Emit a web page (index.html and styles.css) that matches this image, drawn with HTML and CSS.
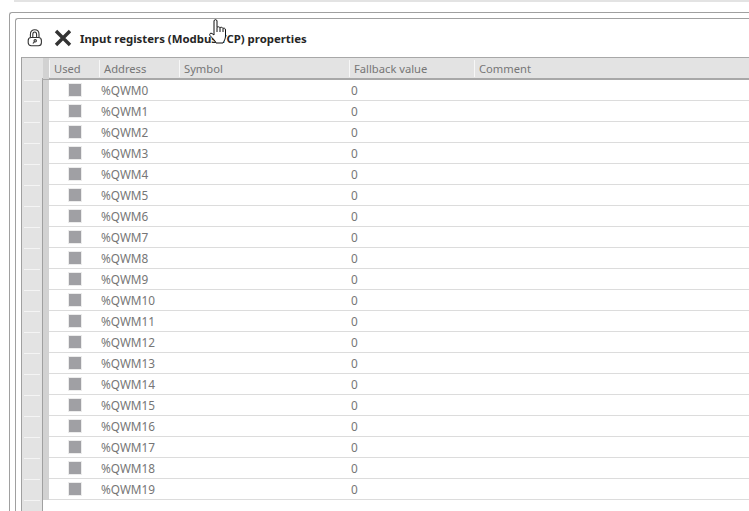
FILE: index.html
```html
<!DOCTYPE html>
<html lang="en">
<head>
<meta charset="utf-8">
<title>Input registers (Modbus TCP) properties</title>
<link rel="stylesheet" href="styles.css">
</head>
<body>
<div class="topband"></div>
<div class="outer">
  <div class="inner">
    <div class="titlebar">
      <svg class="lock" width="16" height="18" viewBox="0 0 16 18" fill="none" stroke="#333" stroke-width="1.100">
        <path d="M3.400 8.500V5.200C3.400 2.400 5.300.8 7.700.8s4.300 1.600 4.300 4.400v3.300"/>
        <path d="M5.800 8.500V5.400C5.800 3.900 6.600 3 7.700 3s1.900.9 1.900 2.400v3.100"/>
        <rect x="1.200" y="8.500" width="13.200" height="8.200" rx="3"/>
        <circle cx="8.200" cy="11.800" r="1.200"/>
        <path d="M7.400 12.800l-1.500 1.700"/>
      </svg>
      <svg class="close" width="18" height="18" viewBox="0 0 18 18" stroke="#333" stroke-width="3.400" fill="none">
        <path d="M2 2l14 14M16 2L2 16"/>
      </svg>
      <span class="title">Input registers (Modbus TCP) properties</span>
    </div>
    <div class="table">
      <div class="gutter">
        <div class="gutter-head"></div>
        <div class="gutter-cell"></div><div class="gutter-cell"></div><div class="gutter-cell"></div><div class="gutter-cell"></div><div class="gutter-cell"></div>
        <div class="gutter-cell"></div><div class="gutter-cell"></div><div class="gutter-cell"></div><div class="gutter-cell"></div><div class="gutter-cell"></div>
        <div class="gutter-cell"></div><div class="gutter-cell"></div><div class="gutter-cell"></div><div class="gutter-cell"></div><div class="gutter-cell"></div>
        <div class="gutter-cell"></div><div class="gutter-cell"></div><div class="gutter-cell"></div><div class="gutter-cell"></div><div class="gutter-cell"></div>
      </div>
      <div class="grid">
        <div class="row head">
          <div class="strip"></div>
          <div class="col used">Used</div>
          <div class="col addr">Address</div>
          <div class="col sym">Symbol</div>
          <div class="col fb">Fallback value</div>
          <div class="col com">Comment</div>
        </div>
        <div class="row"><div class="strip"></div><div class="col used"><i class="box"></i></div><div class="col addr">%QWM0</div><div class="col sym"></div><div class="col fb">0</div><div class="col com"></div></div>
        <div class="row"><div class="strip"></div><div class="col used"><i class="box"></i></div><div class="col addr">%QWM1</div><div class="col sym"></div><div class="col fb">0</div><div class="col com"></div></div>
        <div class="row"><div class="strip"></div><div class="col used"><i class="box"></i></div><div class="col addr">%QWM2</div><div class="col sym"></div><div class="col fb">0</div><div class="col com"></div></div>
        <div class="row"><div class="strip"></div><div class="col used"><i class="box"></i></div><div class="col addr">%QWM3</div><div class="col sym"></div><div class="col fb">0</div><div class="col com"></div></div>
        <div class="row"><div class="strip"></div><div class="col used"><i class="box"></i></div><div class="col addr">%QWM4</div><div class="col sym"></div><div class="col fb">0</div><div class="col com"></div></div>
        <div class="row"><div class="strip"></div><div class="col used"><i class="box"></i></div><div class="col addr">%QWM5</div><div class="col sym"></div><div class="col fb">0</div><div class="col com"></div></div>
        <div class="row"><div class="strip"></div><div class="col used"><i class="box"></i></div><div class="col addr">%QWM6</div><div class="col sym"></div><div class="col fb">0</div><div class="col com"></div></div>
        <div class="row"><div class="strip"></div><div class="col used"><i class="box"></i></div><div class="col addr">%QWM7</div><div class="col sym"></div><div class="col fb">0</div><div class="col com"></div></div>
        <div class="row"><div class="strip"></div><div class="col used"><i class="box"></i></div><div class="col addr">%QWM8</div><div class="col sym"></div><div class="col fb">0</div><div class="col com"></div></div>
        <div class="row"><div class="strip"></div><div class="col used"><i class="box"></i></div><div class="col addr">%QWM9</div><div class="col sym"></div><div class="col fb">0</div><div class="col com"></div></div>
        <div class="row"><div class="strip"></div><div class="col used"><i class="box"></i></div><div class="col addr">%QWM10</div><div class="col sym"></div><div class="col fb">0</div><div class="col com"></div></div>
        <div class="row"><div class="strip"></div><div class="col used"><i class="box"></i></div><div class="col addr">%QWM11</div><div class="col sym"></div><div class="col fb">0</div><div class="col com"></div></div>
        <div class="row"><div class="strip"></div><div class="col used"><i class="box"></i></div><div class="col addr">%QWM12</div><div class="col sym"></div><div class="col fb">0</div><div class="col com"></div></div>
        <div class="row"><div class="strip"></div><div class="col used"><i class="box"></i></div><div class="col addr">%QWM13</div><div class="col sym"></div><div class="col fb">0</div><div class="col com"></div></div>
        <div class="row"><div class="strip"></div><div class="col used"><i class="box"></i></div><div class="col addr">%QWM14</div><div class="col sym"></div><div class="col fb">0</div><div class="col com"></div></div>
        <div class="row"><div class="strip"></div><div class="col used"><i class="box"></i></div><div class="col addr">%QWM15</div><div class="col sym"></div><div class="col fb">0</div><div class="col com"></div></div>
        <div class="row"><div class="strip"></div><div class="col used"><i class="box"></i></div><div class="col addr">%QWM16</div><div class="col sym"></div><div class="col fb">0</div><div class="col com"></div></div>
        <div class="row"><div class="strip"></div><div class="col used"><i class="box"></i></div><div class="col addr">%QWM17</div><div class="col sym"></div><div class="col fb">0</div><div class="col com"></div></div>
        <div class="row"><div class="strip"></div><div class="col used"><i class="box"></i></div><div class="col addr">%QWM18</div><div class="col sym"></div><div class="col fb">0</div><div class="col com"></div></div>
        <div class="row"><div class="strip"></div><div class="col used"><i class="box"></i></div><div class="col addr">%QWM19</div><div class="col sym"></div><div class="col fb">0</div><div class="col com"></div></div>
      </div>
    </div>
  </div>
</div>
<svg class="cursor" width="18" height="25" viewBox="0 0 18 25" stroke="#111" stroke-width="1" fill="#fff">
  <path d="M5 2C5 .2 8 .2 8 2V8.500C8.500 7.500 10.500 7.500 11 8.800 11.500 8 13.500 8 14 9.500 14.500 8.800 16.500 9 16.500 11V17C16.500 20 15 22 14 24H7C6 21 3 19 1 16.500 0 15 1.500 13.500 3 14.500L5 16Z"/>
  <path d="M8 8.500V13M11 8.800V13M14 9.500V13" fill="none"/>
</svg>
</body>
</html>
```

FILE: styles.css
```css
html, body {
  margin: 0;
  padding: 0;
  height: 511px;
  overflow: hidden;
  background: #fff;
}
body {
  position: relative;
  font-family: "Noto Sans", "Open Sans", sans-serif;
  font-size: 11.8px;
  color: #767676;
}
.topband {
  height: 2px;
  margin-left: 14px;
  background: #e3e3e3;
}
.outer {
  box-sizing: border-box;
  height: 499px;
  margin: 10px 0 0 9px;
  padding: 5px 0 0 5px;
  overflow: hidden;
  border: 1px solid #a0a0a0;
  border-right: 0;
  border-bottom: 0;
  border-top-left-radius: 3px;
}
.inner {
  box-sizing: border-box;
  height: 493px;
  padding-left: 5px;
  overflow: hidden;
  border: 1px solid #a0a0a0;
  border-right: 0;
  border-bottom: 0;
  border-top-left-radius: 3px;
}
.titlebar {
  display: flex;
  align-items: center;
  height: 38px;
}
.lock {
  margin-left: 6px;
}
.close {
  margin-left: 11px;
}
.title {
  margin-left: 8px;
  padding-top: 1px;
  font-weight: 700;
  font-size: 11.4px;
  color: #262626;
}
.table {
  display: flex;
  height: 460px;
  border-left: 1px solid #a0a0a0;
  border-top: 1px solid #a8a8a8;
}
.gutter {
  width: 20px;
  flex: none;
  background: #e3e3e3;
  border-right: 1px solid #a0a0a0;
}
.gutter-head {
  height: 22px;
  margin: 0 2px;
  border-bottom: 1px solid #f4f4f4;
}
.gutter-cell {
  height: 20px;
  margin: 0 2px;
  border-bottom: 1px solid #f4f4f4;
}
.grid {
  flex: 1;
  min-width: 0;
}
.row {
  display: flex;
  height: 20px;
  border-bottom: 1px solid #dcdcdc;
  align-items: center;
}
.row .col {
  line-height: 22px;
}
.row.head {
  height: 20px;
  margin-left: -1px;
  padding-left: 1px;
  font-size: 11.2px;
  background: #e3e3e3;
  border-bottom: 2px solid #a8a8a8;
}
.strip {
  width: 6px;
  height: 21px;
  flex: none;
  background: #d2d2d2;
}
.col {
  flex: none;
  box-sizing: border-box;
  white-space: nowrap;
}
.head .col {
  height: 17px;
  padding-left: 4px;
  line-height: 17px;
  border-left: 1px solid #f7f7f7;
}
.used {
  width: 50px;
  display: flex;
  justify-content: center;
}
.head .used {
  justify-content: flex-start;
}
.addr {
  width: 80px;
  padding-left: 2px;
}
.sym {
  width: 170px;
}
.fb {
  width: 125px;
  padding-left: 2px;
}
.com {
  flex: 1;
}
.box {
  display: block;
  width: 12px;
  height: 12px;
  margin-left: 1px;
  background: #a0a0a4;
  border: 1px solid #ececec;
}
.cursor {
  position: absolute;
  left: 209px;
  top: 19px;
}
```
